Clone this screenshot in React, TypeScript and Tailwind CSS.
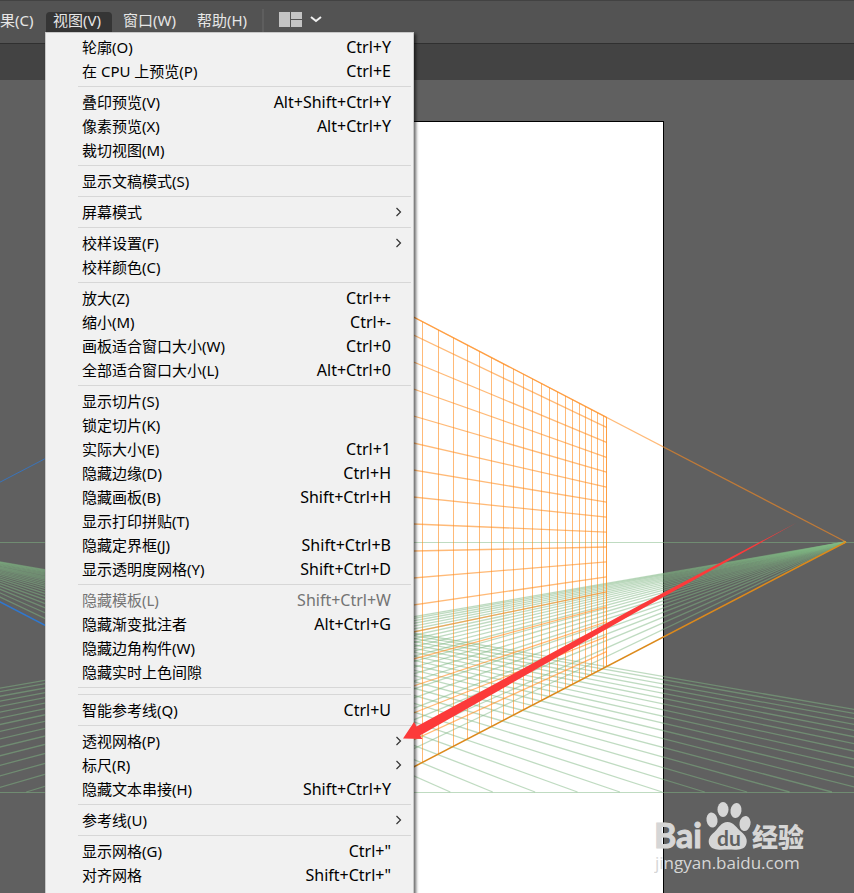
import React from 'react';

type Entry = {
  label: string;
  keys?: string;
  sub?: boolean;
  disabled?: boolean;
};

const groups: Entry[][] = [
  [
    { label: '轮廓(O)', keys: 'Ctrl+Y' },
    { label: '在 CPU 上预览(P)', keys: 'Ctrl+E' },
  ],
  [
    { label: '叠印预览(V)', keys: 'Alt+Shift+Ctrl+Y' },
    { label: '像素预览(X)', keys: 'Alt+Ctrl+Y' },
    { label: '裁切视图(M)' },
  ],
  [{ label: '显示文稿模式(S)' }],
  [{ label: '屏幕模式', sub: true }],
  [{ label: '校样设置(F)', sub: true }, { label: '校样颜色(C)' }],
  [
    { label: '放大(Z)', keys: 'Ctrl++' },
    { label: '缩小(M)', keys: 'Ctrl+-' },
    { label: '画板适合窗口大小(W)', keys: 'Ctrl+0' },
    { label: '全部适合窗口大小(L)', keys: 'Alt+Ctrl+0' },
  ],
  [
    { label: '显示切片(S)' },
    { label: '锁定切片(K)' },
    { label: '实际大小(E)', keys: 'Ctrl+1' },
    { label: '隐藏边缘(D)', keys: 'Ctrl+H' },
    { label: '隐藏画板(B)', keys: 'Shift+Ctrl+H' },
    { label: '显示打印拼贴(T)' },
    { label: '隐藏定界框(J)', keys: 'Shift+Ctrl+B' },
    { label: '显示透明度网格(Y)', keys: 'Shift+Ctrl+D' },
  ],
  [
    { label: '隐藏模板(L)', keys: 'Shift+Ctrl+W', disabled: true },
    { label: '隐藏渐变批注者', keys: 'Alt+Ctrl+G' },
    { label: '隐藏边角构件(W)' },
    { label: '隐藏实时上色间隙' },
  ],
  // an empty group leaves two rules in a row
  [],
  [{ label: '智能参考线(Q)', keys: 'Ctrl+U' }],
  [
    { label: '透视网格(P)', sub: true },
    { label: '标尺(R)', sub: true },
    { label: '隐藏文本串接(H)', keys: 'Shift+Ctrl+Y' },
  ],
  [{ label: '参考线(U)', sub: true }],
  [
    { label: '显示网格(G)', keys: 'Ctrl+"' },
    { label: '对齐网格', keys: 'Shift+Ctrl+"' },
  ],
];

// Two point perspective grid, in window coordinates
const HORIZON = 542;
const GROUND = 792;
const LEFT_VP = -115;
const RIGHT_VP = 846;
const ORIGIN = 365.5;
const PLANE_END = 606.5;
const SPAN = RIGHT_VP - ORIGIN;

const floorReach = [...Array.from({ length: 22 }, (_, i) => SPAN + 42.4 * (i + 1)), 1447];
const wallHeights = [...Array.from({ length: 16 }, (_, i) => GROUND - 30 * (i + 1)), GROUND - 500];
const wallColumns = [
  385.5, 404.5, 422.5, 438.5, 453.5, 467.5, 479.5, 491.5, 503.5, 513.5, 523.5, 532.5, 541.5,
  549.5, 557.5, 565.5, 572.5, 579.5, 585.5, 591.5, 597.5, 603.5, 606.5,
];

const wallEdge = (x: number, y: number) =>
  HORIZON + ((y - HORIZON) * (RIGHT_VP - x)) / SPAN;

const PerspectiveGrid = () => (
  <svg className="absolute left-0 top-0 overflow-visible" width="854" height="893" fill="none">
    <g stroke="#7fb884" strokeOpacity="0.5" strokeWidth="1.3">
      {floorReach.map((reach) => (
        <React.Fragment key={reach}>
          <path d={`M${LEFT_VP} ${HORIZON}L${LEFT_VP + reach} ${GROUND}`} />
          <path d={`M${RIGHT_VP} ${HORIZON}L${RIGHT_VP - reach} ${GROUND}`} />
        </React.Fragment>
      ))}
      <path d={`M-200 ${HORIZON + 0.5}H1600M-200 ${GROUND + 0.5}H1600`} strokeWidth="1" />
    </g>

    <g stroke="#2f78d0">
      <path d={`M${LEFT_VP} ${HORIZON}L${ORIGIN} ${GROUND - 500}`} strokeOpacity="0.8" />
      <path d={`M${LEFT_VP} ${HORIZON}L${ORIGIN} ${GROUND}`} strokeWidth="1.5" />
    </g>

    <g stroke="#ff8c1e" strokeOpacity="0.6">
      {wallHeights.map((y) => (
        <path key={y} d={`M${ORIGIN} ${y}L${PLANE_END} ${wallEdge(PLANE_END, y)}`} strokeWidth="1.3" />
      ))}
      {wallColumns.map((x) => (
        <path key={x} d={`M${x} ${wallEdge(x, GROUND - 500)}V${wallEdge(x, GROUND)}`} />
      ))}
      <path d={`M${PLANE_END} ${wallEdge(PLANE_END, GROUND - 500)}V${wallEdge(PLANE_END, GROUND)}`} />
      <path d={`M${ORIGIN} ${GROUND - 500}L${RIGHT_VP} ${HORIZON}`} strokeWidth="1.3" />
    </g>
    <path d={`M${ORIGIN} ${GROUND}L${RIGHT_VP} ${HORIZON}`} stroke="#dc8a1c" strokeWidth="1.5" />
  </svg>
);

const Watermark = () => (
  <svg className="absolute left-[654px] top-[796px]" width="160" height="84" fill="#d6d6d6">
    <text x="0" y="52" fontSize="34" fontWeight="700" fontFamily="Lato, sans-serif" stroke="#d6d6d6">Bai</text>
    <text x="98" y="51" fontSize="26" fontWeight="900" fontFamily="'Noto Sans CJK SC', sans-serif">经验</text>
    <ellipse cx="58" cy="24" rx="5.5" ry="7.5" transform="rotate(-10 58 24)" />
    <ellipse cx="69" cy="13.5" rx="5.5" ry="7.5" />
    <ellipse cx="82" cy="14.5" rx="5.5" ry="7.5" transform="rotate(8 82 14.5)" />
    <ellipse cx="91" cy="27.5" rx="5.5" ry="7.5" transform="rotate(10 91 27.5)" />
    <path d="M73.5 26c-6 0-9 6-13 10-5 4-7 8-5 13 3 6 12 4.500 18.500 4.500s15.500 1.500 18-4.500c2-5 0-9-4.500-13-5-4-8-10-14-10z" />
    <text x="63" y="50" fontSize="21" fontWeight="700" fill="#606060" fontFamily="Lato, sans-serif">du</text>
    <text x="1" y="73" fontSize="17" fontFamily="'Open Sans', 'Noto Sans', sans-serif">jingyan.baidu.com</text>
  </svg>
);

const MenuRow = ({ label, keys, sub, disabled }: Entry) => (
  <li>
    <button
      type="button"
      disabled={disabled}
      className="flex h-6 w-full items-center pr-[22px] pl-9 text-left text-black disabled:text-[#747474]"
    >
      <span className="grow text-[15px]">{label}</span>
      {keys && <kbd className="font-['Noto_Sans','Noto_Sans_CJK_SC',sans-serif] text-base">{keys}</kbd>}
      {sub && (
        <svg className="-mr-3 h-3 w-2" viewBox="0 0 8 12" fill="none" stroke="#333" strokeWidth="1.2">
          <path d="M1.5 2l4 4-4 4" />
        </svg>
      )}
    </button>
  </li>
);

const ViewMenu = () => (
  <div className="absolute top-8 left-[45px] h-[1000px] w-[369px] border border-[#c8c8c8] bg-[#f1f1f1] pt-[2px] shadow-[2px_2px_3px_rgba(0,0,0,0.6)]">
    {groups.map((group, i) => (
      <ul key={i} className="flex flex-col">
        {i > 0 && <li role="separator" className="my-[3px] mr-[2px] ml-8 h-px bg-[#d7d7d7]" />}
        {group.map((entry) => (
          <MenuRow key={entry.label} {...entry} />
        ))}
      </ul>
    ))}
  </div>
);

const App = () => {
  return (
    <div className="relative flex h-screen flex-col overflow-hidden bg-[#606060] font-['Noto_Sans','Noto_Sans_CJK_SC',sans-serif]">
      <header className="flex h-[43px] shrink-0 items-start border-t border-[#424242] bg-[#535353] text-[15px] text-[#e6e6e6]">
        <nav className="flex pt-[11px]">
          <button type="button" className="h-5 w-[46px] pb-1 text-left leading-4">果(C)</button>
          <button type="button" className="h-5 w-[66px] rounded-t-sm bg-[#353535] pr-1 pb-1 leading-4">视图(V)</button>
          <button type="button" className="h-5 w-[75px] pb-1 leading-4">窗口(W)</button>
          <button type="button" className="h-5 w-[70px] pb-1 leading-4">帮助(H)</button>
        </nav>
        <div className="mt-2 ml-[5px] h-6 w-[2px] bg-[#5e5e5e]" />
        <button type="button" aria-label="布局" className="mt-[11px] ml-[15px] flex items-center gap-2">
          <svg width="23" height="15" fill="#c4c4c4">
            <path d="M0 0h11v15H0zM12 0h11v7H12zM12 8h11v7H12z" />
          </svg>
          <svg width="12" height="7" fill="none" stroke="#f0f0f0" strokeWidth="2">
            <path d="M1 1l5 4 5-4" />
          </svg>
        </button>
      </header>
      <div className="h-[37px] shrink-0 border-t border-[#303030] bg-[#434343]" />

      <main>
        <div className="absolute top-[121px] left-[68px] h-[900px] w-[596px] border border-black bg-white" />
        <PerspectiveGrid />
        <Watermark />
      </main>

      <ViewMenu />

      <svg className="pointer-events-none absolute top-0 left-0" width="854" height="893" fill="#fc3a3a">
        <path d="M403 738.5L414 722l2.500 4.500L640 605 797 522.500 640 610 420 735.500l2.500 3.500z" />
      </svg>
    </div>
  );
};

export default App;
